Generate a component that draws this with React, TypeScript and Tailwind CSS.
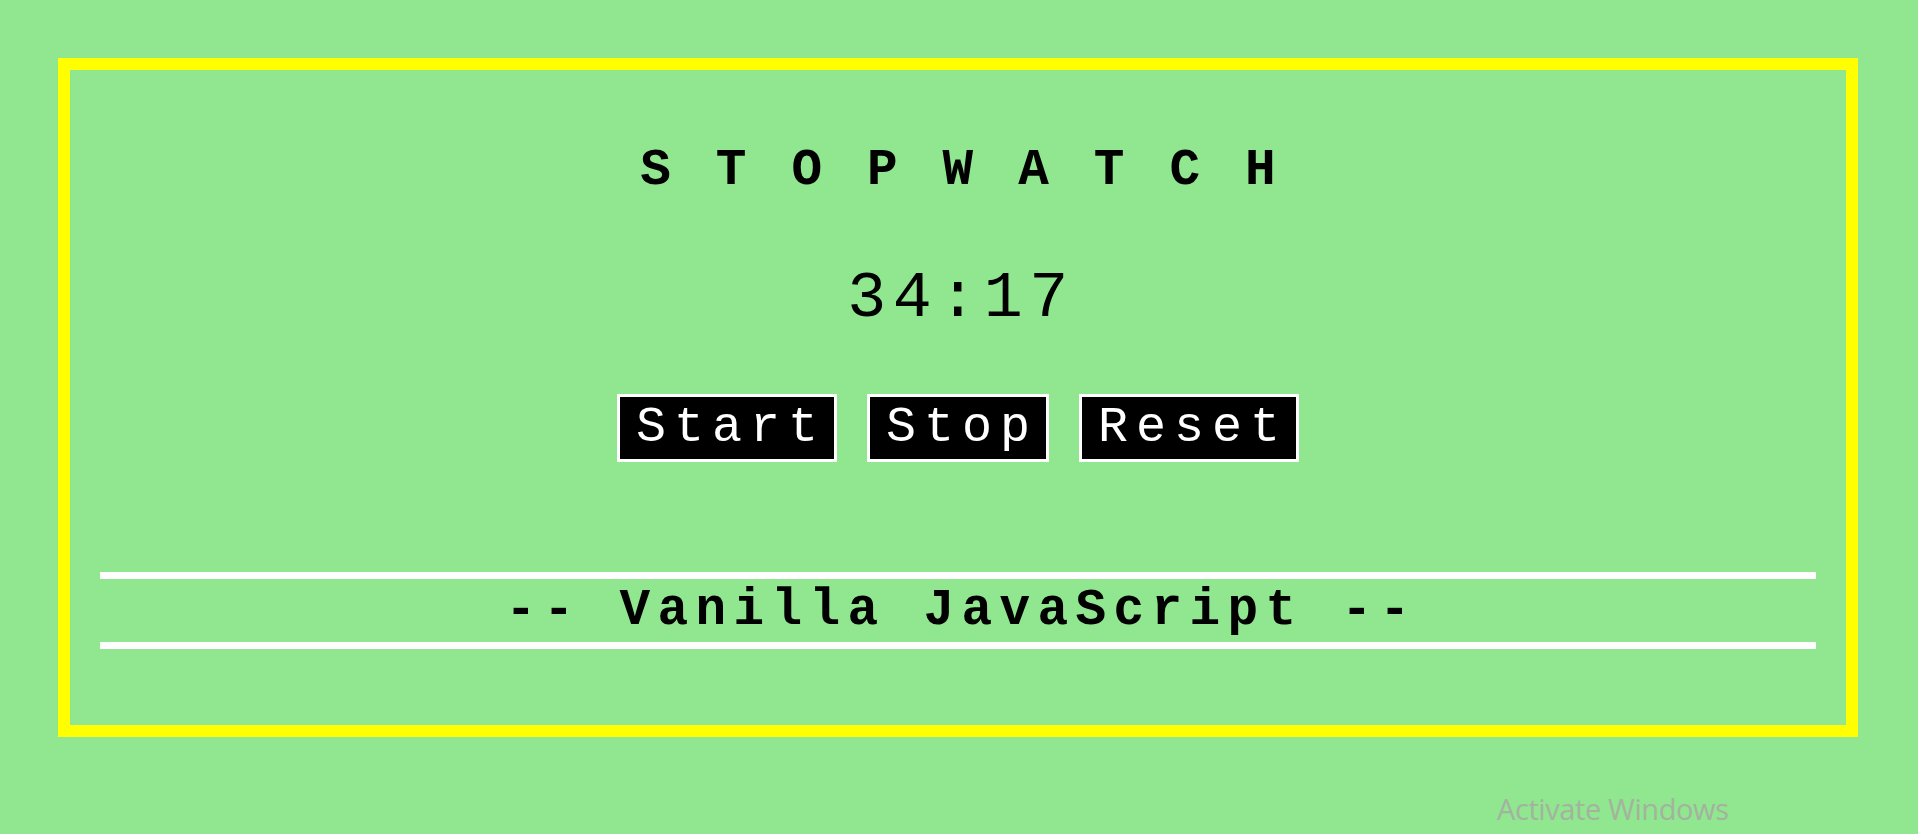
import React from "react";

export default function App() {
  const mono = "font-['Liberation_Mono','Courier_New',monospace]";
  return (
    <div className="relative w-full h-[834px] overflow-hidden bg-[#91e690]">
      <div className="pt-[58px] pl-[58px]">
        <div className="w-[1800px] h-[679px] border-[12px] border-[#ffff00] flex flex-col items-center">
          <div
            className={`${mono} mt-[74px] h-[54px] text-[51px] leading-[54px] font-bold tracking-[7.2px] pl-[7px] whitespace-pre text-black`}
          >
            S T O P W A T C H
          </div>
          <div
            className={`${mono} mt-[67px] h-[68px] text-[65px] leading-[68px] font-normal tracking-[6.5px] pl-[6px] text-black`}
          >
            34:17
          </div>
          <div className="mt-[61px] flex flex-row gap-[30px] h-[68px]">
            <button
              className={`${mono} w-[220px] h-[68px] border-[3px] border-white bg-black text-white text-[50px] leading-none tracking-[8px] pl-[8px] flex items-center justify-center`}
            >
              Start
            </button>
            <button
              className={`${mono} w-[182px] h-[68px] border-[3px] border-white bg-black text-white text-[50px] leading-none tracking-[8px] pl-[8px] flex items-center justify-center`}
            >
              Stop
            </button>
            <button
              className={`${mono} w-[220px] h-[68px] border-[3px] border-white bg-black text-white text-[50px] leading-none tracking-[8px] pl-[8px] flex items-center justify-center`}
            >
              Reset
            </button>
          </div>
          <div className="mt-[110px] self-stretch mx-[30px] h-[7px] bg-white" />
          <div
            className={`${mono} h-[63px] text-[51px] leading-[63px] font-bold tracking-[7.4px] pl-[7px] whitespace-pre text-black`}
          >
            -- Vanilla JavaScript --
          </div>
          <div className="self-stretch mx-[30px] h-[7px] bg-white" />
        </div>
      </div>
      <div className="absolute left-[1497px] top-[791px] font-['Open_Sans','Noto_Sans',sans-serif] text-[29px] leading-[36px] font-normal tracking-[-0.4px] text-[#a3b39f] whitespace-nowrap">
        Activate Windows
      </div>
    </div>
  );
}
